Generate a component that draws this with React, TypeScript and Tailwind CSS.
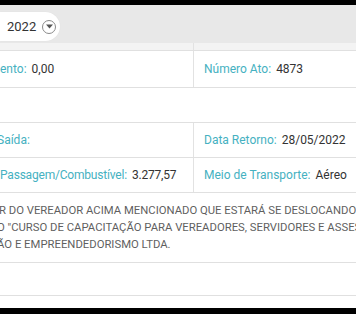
import React from "react";

const Label = ({ children }: { children: React.ReactNode }) => (
  <span className="text-[#45b1c1]">{children}</span>
);

const Value = ({ children }: { children: React.ReactNode }) => (
  <span className="text-[#333333] ml-[5px]">{children}</span>
);

export default function App() {
  return (
    <div className="w-[356px] h-[314px] bg-black overflow-hidden flex flex-col font-['Roboto',sans-serif] text-[12px]">
      <div className="h-[5px] bg-black" />
      <div className="flex flex-col bg-white h-[303px] overflow-hidden">
        {/* barra do ano */}
        <div className="h-[38px] bg-[#e8e8e8] flex items-start pt-[7px] shrink-0">
          <div className="h-[29px] w-[60px] bg-white rounded-r-full flex items-center pl-[7px] gap-[6px] shadow-[0_0_1px_rgba(0,0,0,0.08)]">
            <span className="text-[13px] text-[#333333]">2022</span>
            <span className="w-[14px] h-[14px] rounded-full border border-[#8a8a8a] flex items-center justify-center">
              <svg width="7" height="5" viewBox="0 0 7 5">
                <path d="M0 0.5h7L3.5 4.5z" fill="#555555" />
              </svg>
            </span>
          </div>
        </div>

        {/* faixa + linha 1 */}
        <div className="flex h-[7px] bg-[#f3f3f3] shrink-0">
          <div className="w-[194px] border-r border-[#e2e2e2]" />
          <div className="flex-1" />
        </div>
        <div className="flex h-[37px] border-t border-[#e0e0e0] shrink-0">
          <div className="w-[194px] border-r border-[#e2e2e2] flex items-center whitespace-nowrap">
            <Label>ento:</Label>
            <Value>0,00</Value>
          </div>
          <div className="flex-1 flex items-center pl-[10px] whitespace-nowrap">
            <Label>Número Ato:</Label>
            <Value>4873</Value>
          </div>
        </div>

        {/* linha vazia */}
        <div className="h-[35px] border-t border-[#e0e0e0] shrink-0" />

        <div className="flex h-[35px] border-t border-[#e0e0e0] shrink-0">
          <div className="w-[194px] border-r border-[#e2e2e2] flex items-center whitespace-nowrap overflow-hidden">
            <span className="ml-[-3px]">
              <Label>Saída:</Label>
            </span>
          </div>
          <div className="flex-1 flex items-center pl-[10px] whitespace-nowrap">
            <Label>Data Retorno:</Label>
            <Value>28/05/2022</Value>
          </div>
        </div>

        <div className="flex h-[35px] border-t border-[#e0e0e0] shrink-0">
          <div className="w-[194px] border-r border-[#e2e2e2] flex items-center whitespace-nowrap overflow-hidden tracking-[-0.2px]">
            <Label>Passagem/Combustível:</Label>
            <Value>3.277,57</Value>
          </div>
          <div className="flex-1 flex items-center pl-[10px] whitespace-nowrap">
            <Label>Meio de Transporte:</Label>
            <Value>Aéreo</Value>
          </div>
        </div>

        {/* descrição */}
        <div className="border-t border-[#e0e0e0] pt-[9px] pb-[9px] text-[11.3px] leading-[17px] text-[#5f5f5f] whitespace-nowrap overflow-hidden shrink-0">
          <div className="ml-[-1px]">R DO VEREADOR ACIMA MENCIONADO QUE ESTARÁ SE DESLOCANDO PARA</div>
          <div className="ml-[-3px]">O "CURSO DE CAPACITAÇÃO PARA VEREADORES, SERVIDORES E ASSESSORES</div>
          <div className="ml-[-3px]">ÃO E EMPREENDEDORISMO LTDA.</div>
        </div>

        <div className="h-[34px] border-t border-[#e0e0e0] border-b shrink-0" />
      </div>
      <div className="flex-1 bg-black" />
    </div>
  );
}
